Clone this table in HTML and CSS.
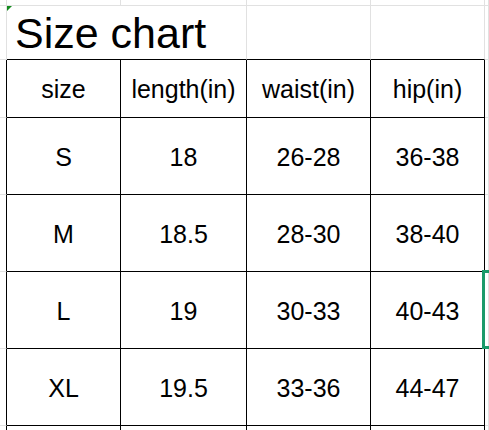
FILE: index.html
```html
<!DOCTYPE html>
<html lang="en">
<head>
<meta charset="utf-8">
<title>Size chart</title>
<link rel="stylesheet" href="styles.css">
</head>
<body>
<div class="sheet">
  <!-- row 0 -->
  <div class="c"></div><div class="c"></div><div class="c"></div><div class="c"></div><div class="c"></div><div class="c"></div>
  <!-- row 1: title -->
  <div class="c"></div>
  <div class="c title span2 bb"><span class="tri"></span>Size chart</div>
  <div class="c bb"></div><div class="c bb"></div><div class="c"></div>
  <!-- header -->
  <div class="c br"></div>
  <div class="c t">size</div><div class="c t">length(in)</div><div class="c t">waist(in)</div><div class="c t">hip(in)</div>
  <div class="c"></div>
  <!-- S -->
  <div class="c br"></div>
  <div class="c t">S</div><div class="c t">18</div><div class="c t">26-28</div><div class="c t">36-38</div>
  <div class="c"></div>
  <!-- M -->
  <div class="c br"></div>
  <div class="c t">M</div><div class="c t">18.5</div><div class="c t">28-30</div><div class="c t">38-40</div>
  <div class="c"></div>
  <!-- L -->
  <div class="c br"></div>
  <div class="c t">L</div><div class="c t">19</div><div class="c t">30-33</div><div class="c t">40-43</div>
  <div class="c sel"><span class="selbox"></span></div>
  <!-- XL -->
  <div class="c br"></div>
  <div class="c t">XL</div><div class="c t">19.5</div><div class="c t">33-36</div><div class="c t">44-47</div>
  <div class="c"></div>
  <!-- next row (partial) -->
  <div class="c br last"></div>
  <div class="c t last"></div><div class="c t last"></div><div class="c t last"></div><div class="c t last"></div>
  <div class="c last"></div>
</div>
</body>
</html>
```

FILE: styles.css
```css
html, body {
  margin: 0;
  padding: 0;
  background: #ffffff;
  overflow: hidden;
  width: 489px;
  height: 430px;
}

.sheet {
  display: grid;
  grid-template-columns: 7px 114px 126px 124px 114px 1fr;
  grid-template-rows: 6px 54px 58px 77px 77px 77px 77px 4px;
  font-family: "Liberation Sans", Arial, sans-serif;
  color: #000;
}

.c {
  box-sizing: border-box;
  border-right: 1px solid #e1e1e1;
  border-bottom: 1px solid #e1e1e1;
  display: flex;
  align-items: center;
  justify-content: center;
  font-size: 25px;
  position: relative;
}

.span2 {
  grid-column: span 2;
}

.title {
  justify-content: flex-start;
  padding-left: 8px;
  padding-top: 2px;
  font-size: 43px;
}

.bb {
  border-bottom-color: #000;
}

.br {
  border-right-color: #000;
}

.t {
  border-right-color: #000;
  border-bottom-color: #000;
  padding-top: 2px;
}

.last {
  border-bottom: 0;
}

.tri {
  position: absolute;
  left: 0;
  top: 0;
  width: 0;
  height: 0;
  border-top: 5px solid #138a1d;
  border-right: 5px solid transparent;
}

.selbox {
  position: absolute;
  left: -3px;
  top: -2px;
  width: 20px;
  height: 79px;
  box-sizing: border-box;
  border: 3px solid #1b9a6a;
  border-right: none;
}
```
